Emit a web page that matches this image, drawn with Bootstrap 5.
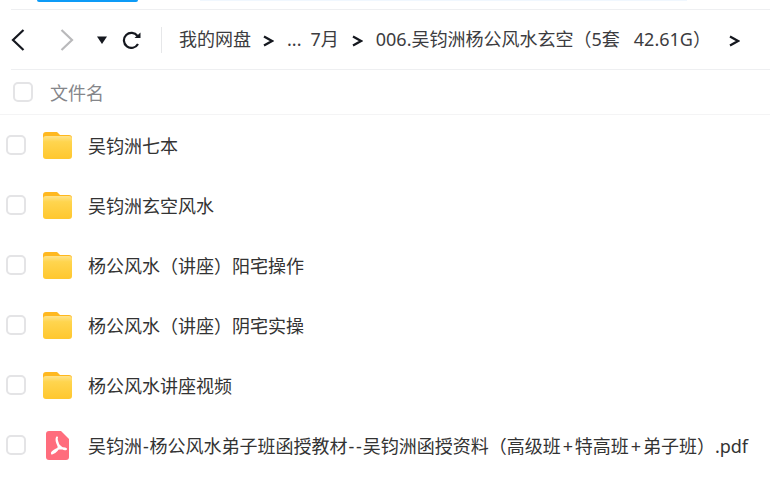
<!DOCTYPE html>
<html lang="zh-CN">

<head>
    <meta charset="UTF-8">
    <title>我的网盘</title>
    <link href="https://cdn.jsdelivr.net/npm/bootstrap@5.3.0/dist/css/bootstrap.min.css" rel="stylesheet">
    <style>
        html, body {
            height: 479px;
            overflow: hidden;
        }

        body {
            background: #fff;
            color: #333;
            font-family: "Noto Sans", "Noto Sans CJK SC", sans-serif;
            font-size: 18px;
        }

        /* top strip with the cut off tabs */
        .top-strip {
            height: 9px;
            padding-left: 37px;
            gap: 62px;
        }

        .tab-blue {
            width: 101px;
            height: 2px;
            background: #0d9bf7;
            border-radius: 0 0 3px 3px;
        }

        .tab-pale {
            width: 487px;
            height: 1px;
            background: #f0f7fe;
        }

        .crumb-bar {
            height: 61px;
            margin-left: 11px;
            border-top: 1px solid #eeeff1;
            border-bottom: 1px solid #eeeff1;
        }

        .nav-icon {
            flex: none;
            display: block;
        }

        .bar-sep {
            width: 1px;
            height: 26px;
            background: #e6e7e9;
            margin: 0 17px 0 19px;
        }

        .crumb-text {
            color: #3c3c40;
            white-space: nowrap;
            line-height: 24px;
            padding-bottom: 2px;
        }

        .list-head {
            height: 45px;
            border-bottom: 1px solid #f4f4f5;
            padding-left: 13px;
            color: #85868a;
        }

        .head-label {
            margin-left: 17px;
            line-height: 24px;
            padding-top: 2px;
        }

        .tick {
            width: 20px;
            height: 20px;
            border: 2px solid #e4e4e6;
            border-radius: 5px;
            flex: none;
            background: #fff;
        }

        .file-row {
            height: 60px;
            padding-left: 6px;
        }

        .file-row .file-icon {
            margin-left: 17px;
            margin-right: 16px;
            flex: none;
        }

        .file-name {
            color: #333;
            white-space: nowrap;
            line-height: 24px;
            padding-top: 2px;
        }

        /* hyphen and plus run wider in the original font */
        .sym-h {
            padding: 0 .9px;
        }

        .sym-p {
            padding: 0 1.9px;
        }
    </style>
</head>

<body>
    <div class="top-strip d-flex align-items-start">
        <div class="tab-blue"></div>
        <div class="tab-pale"></div>
    </div>

    <!-- breadcrumb -->
    <div class="crumb-bar d-flex align-items-center">
        <svg class="nav-icon" width="14" height="22" viewBox="0 0 14 22" fill="none" stroke="#15181f" stroke-width="2.2">
            <path d="M12.500 1 2 11l10.500 10" />
        </svg>
        <svg class="nav-icon" width="14" height="22" viewBox="0 0 14 22" fill="none" stroke="#b9b9bb" stroke-width="2.2" style="margin-left:35px">
            <path d="M1.500 1 12 11 1.500 21" />
        </svg>
        <svg class="nav-icon" width="10" height="8" viewBox="0 0 10 8" fill="#15181f" style="margin-left:23px">
            <path d="M0 .5h10L5 8z" />
        </svg>
        <svg class="nav-icon" width="20" height="18" viewBox="0 0 20 18" fill="none" stroke="#15181f" stroke-width="2.2" style="margin-left:15px">
            <path d="M16 13a7.500 7.500 0 1 1-.5-8" />
            <path d="M18.500 1.500v5.500h-6z" fill="#15181f" stroke="none" />
        </svg>
        <div class="bar-sep"></div>
        <span class="crumb-text">我的网盘</span>
        <svg class="nav-icon" width="11" height="12" viewBox="0 0 11 12" fill="none" stroke="#15181f" stroke-width="2.2" style="margin:2px 13px 0 12px">
            <path d="m1 1.500 8 4.500-8 4.500" />
        </svg>
        <span class="crumb-text">...</span>
        <span class="crumb-text" style="margin-left:9px">7月</span>
        <svg class="nav-icon" width="11" height="12" viewBox="0 0 11 12" fill="none" stroke="#15181f" stroke-width="2.2" style="margin:2px 13px 0 13px">
            <path d="m1 1.500 8 4.500-8 4.500" />
        </svg>
        <span class="crumb-text">006.吴钧洲杨公风水玄空（5套&nbsp;&nbsp;&nbsp;42.61G）</span>
        <svg class="nav-icon" width="11" height="12" viewBox="0 0 11 12" fill="none" stroke="#15181f" stroke-width="2.2" style="margin:2px 0 0 18px">
            <path d="m1 1.500 8 4.500-8 4.500" />
        </svg>
    </div>

    <div class="list-head d-flex align-items-center">
        <span class="tick"></span>
        <span class="head-label">文件名</span>
    </div>

    <!-- folder icon shared by the rows -->
    <svg width="0" height="0" class="position-absolute">
        <defs>
            <linearGradient id="fold" x1="0" y1="0" x2="0" y2="1">
                <stop offset="0" stop-color="#ffe38a" />
                <stop offset=".25" stop-color="#ffd54f" />
                <stop offset="1" stop-color="#ffc72e" />
            </linearGradient>
            <symbol id="folder" viewBox="0 0 29 27">
                <path d="M3 0h10c1 0 1.600.4 2.300 1.200L17 3h9a3 3 0 0 1 3 3v5H0V3a3 3 0 0 1 3-3z" fill="#ffb81f" />
                <rect y="4" width="29" height="23" rx="3" fill="url(#fold)" />
            </symbol>
        </defs>
    </svg>

    <div id="fileList"></div>

    <script>
        const folderNames = ["吴钧洲七本", "吴钧洲玄空风水", "杨公风水（讲座）阳宅操作", "杨公风水（讲座）阴宅实操", "杨公风水讲座视频"];
        const folderIcon = `<svg class="file-icon" width="29" height="27"><use href="#folder"></use></svg>`;
        const pdfIcon = `<svg class="file-icon" width="29" height="29" viewBox="0 0 29 29">
            <path d="M6 0h12l8 8v18a3 3 0 0 1-3 3H6a3 3 0 0 1-3-3V3a3 3 0 0 1 3-3z" fill="#ff6d7d" />
            <path d="M14 6.500c-1.200 2 .5 6.500 1.500 8.500 1 1.800-3.500 7-6.500 7.500M9 22.500c-1-1.500 5-4.500 7-5 2-.5 6-.5 7 .5M23 18c-2 1-5-1.500-7-3.500-1-1-3-7-2-8" fill="none" stroke="#fff" stroke-width="2" stroke-linecap="round" />
        </svg>`;

        function fileRow(icon, name) {
            return `<div class="file-row d-flex align-items-center">
                <span class="tick"></span>${icon}<span class="file-name">${name}</span>
            </div>`;
        }

        let rows = folderNames.map((name) => fileRow(folderIcon, name)).join("");
        rows += fileRow(pdfIcon, '吴钧洲<span class="sym-h">-</span>杨公风水弟子班函授教材<span class="sym-h">-</span><span class="sym-h">-</span>吴钧洲函授资料（高级班<span class="sym-p">+</span>特高班<span class="sym-p">+</span>弟子班）.pdf');
        document.getElementById("fileList").innerHTML = rows;
    </script>
    <script src="https://cdn.jsdelivr.net/npm/bootstrap@5.3.0/dist/js/bootstrap.bundle.min.js"></script>
</body>

</html>
